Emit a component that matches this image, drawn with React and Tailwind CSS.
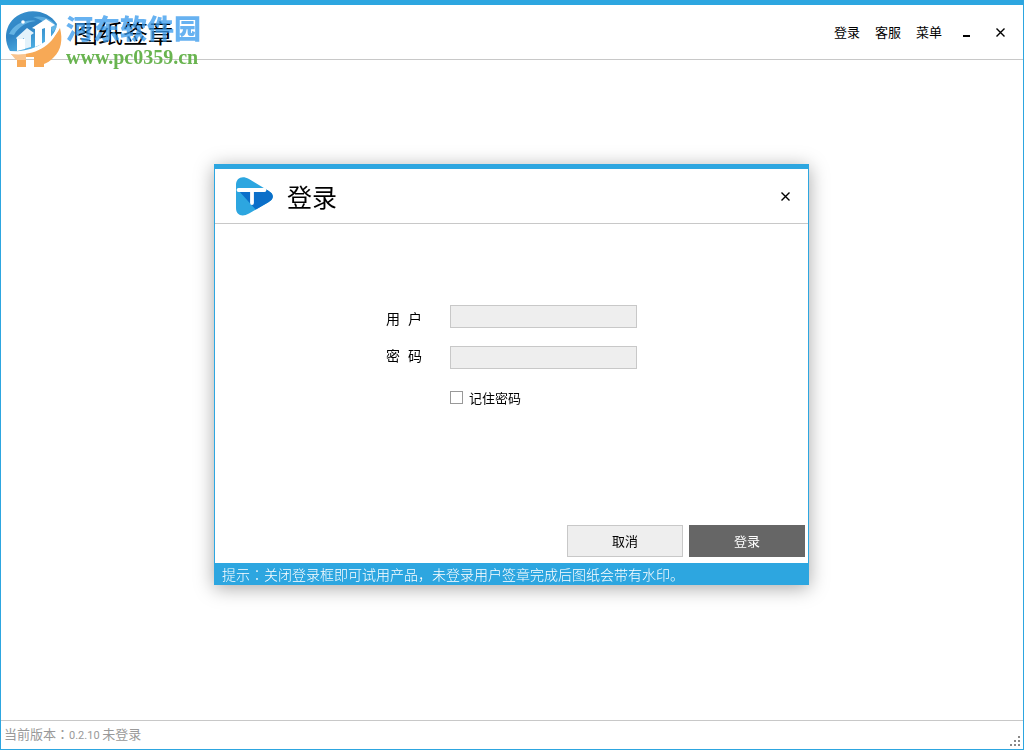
import { useState } from 'react';

const menuItems = ['登录', '客服', '菜单'];

const fields = [
    { id: 'user', label: ['用', '户'], type: 'text' },
    { id: 'password', label: ['密', '码'], type: 'password' },
];

function CloseIcon() {
    return (
        <svg width="9" height="9" viewBox="0 0 9 9" fill="none" stroke="currentColor" strokeWidth="1.4">
            <path d="M0.5 0.5 8.5 8.5M8.5 0.5 0.5 8.5" />
        </svg>
    );
}

// Centred full-width colon, the SC face pushes it to the left edge
function Colon() {
    return <span className="font-['Noto_Sans_CJK_TC',sans-serif]">：</span>;
}

function PlayLogo() {
    return (
        <svg width="38" height="40" viewBox="0 0 38 40" aria-hidden="true">
            <defs>
                <clipPath id="play-shape">
                    <path d="M1 9C1 2 7 -1 14 3L33 14.5C39.5 18 39.5 23 33 26.5L14 37.5C7 41.5 1 39 1 32Z" />
                </clipPath>
            </defs>
            <g clipPath="url(#play-shape)">
                <rect width="38" height="40" fill="#2da6e0" />
                <path d="M4 15 31 13.5 38 10V28L21 34Z" fill="#0b6fc9" />
            </g>
            <path d="M3.5 14H29.5M17 14V27" stroke="#fff" strokeWidth="3.8" strokeLinecap="round" fill="none" />
        </svg>
    );
}

function GlobeLogo() {
    return (
        <svg width="58" height="58" viewBox="0 0 58 58" aria-hidden="true">
            <defs>
                <linearGradient id="globe-blue" x1="0" y1="0" x2="0.6" y2="1">
                    <stop offset="0" stopColor="#3a93cf" />
                    <stop offset="0.5" stopColor="#2f84c4" />
                    <stop offset="1" stopColor="#55b8ea" />
                </linearGradient>
            </defs>
            <path d="M5 41C-2 30 0 14 12 6C25 -3 44 1 52 14C50 28 37 38 22 41C15 42 9 42 5 41Z" fill="url(#globe-blue)" />
            <path d="M4 24C9 14 20 9 31 11C22 12 14 16 9 25Z" fill="#7cc6f0" opacity="0.7" />
            <path d="M28 7C38 5 47 9 52 17L48 22C44 14 37 10 28 7Z" fill="#7cc6f0" opacity="0.6" />
            <circle cx="18" cy="12" r="1.8" fill="#fff" />
            <path d="M11 28 22 18 29 23 26 25V37L19 39V28L14 32Z" fill="#e3f2fb" />
            <path d="M12 29H20V39L12 41Z" fill="#fff" />
            <path d="M27 18 41 9 50 15 46 17V29L40 33V18L37 19V34L30 37V19Z" fill="#fff" />
            <path d="M6 44C26 45 46 35 55 18C58 30 56 40 49 47C45 51 42 53 39 54V57H29V47H21V57H12V49Z" fill="#f7a956" />
            <path d="M6 44H21V50H11Z" fill="#f9c48e" />
            <path d="M4 41C24 43 45 34 54 15C50 36 28 47 6 44Z" fill="#fff" />
        </svg>
    );
}

function Watermark() {
    return (
        <div className="pointer-events-none absolute top-[5px] left-1 z-10 flex items-start gap-[3px]">
            <GlobeLogo />
            <div className="whitespace-nowrap">
                <div className="text-[27px] leading-9 font-black text-[#3498ec] opacity-75">河东软件园</div>
                <div className="pt-px font-['Liberation_Serif',serif] text-xl leading-5 font-bold text-[#69b450]">
                    www.pc0359.cn
                </div>
            </div>
        </div>
    );
}

function LoginDialog() {
    const [remember, setRemember] = useState(false);

    return (
        <form
            role="dialog"
            aria-labelledby="dialog-title"
            onSubmit={(e) => e.preventDefault()}
            className="flex w-full max-w-[595px] flex-col border border-t-5 border-[#2da6e0] bg-white shadow-[0_3px_18px_rgba(0,0,0,0.35)]"
        >
            <header className="flex h-[55px] items-center border-b border-[#c8c8c8] pr-[17px] pl-5">
                <PlayLogo />
                <h2 id="dialog-title" className="ml-[14px] text-[25px] leading-8">登录</h2>
                <button type="button" aria-label="关闭" className="ml-auto p-px">
                    <CloseIcon />
                </button>
            </header>

            <div className="flex flex-col items-center pt-[81px] pb-[118px]">
                <div className="flex flex-col gap-[19px]">
                    <div className="flex">
                        <div className="flex w-16 flex-col gap-[17px] pt-[3px]">
                            {fields.map((field) => (
                                <label key={field.id} htmlFor={field.id} className="flex gap-2 text-sm leading-5">
                                    {field.label.map((char) => (
                                        <span key={char}>{char}</span>
                                    ))}
                                </label>
                            ))}
                        </div>
                        <div className="flex flex-col gap-[18px]">
                            {fields.map((field) => (
                                <input
                                    key={field.id}
                                    id={field.id}
                                    type={field.type}
                                    className="h-[23px] w-[187px] border border-[#c8c8c8] bg-[#eee] px-1 text-sm outline-none"
                                />
                            ))}
                        </div>
                    </div>
                    <label className="ml-16 flex items-center gap-[6px] text-[13px] leading-[19px]">
                        <input
                            type="checkbox"
                            checked={remember}
                            onChange={(e) => setRemember(e.target.checked)}
                            className="size-[13px] appearance-none border border-[#999] bg-white checked:bg-[#2da6e0]"
                        />
                        记住密码
                    </label>
                </div>
            </div>

            <div className="flex justify-end gap-[6px] pr-[3px] pb-[6px] text-[13px]">
                <button type="button" className="h-8 w-29 border border-[#c8c8c8] bg-[#eee]">取消</button>
                <button type="submit" className="h-8 w-29 bg-[#666] text-white">登录</button>
            </div>

            <p className="bg-[#2da6e0] px-[7px] pt-px text-sm leading-5 font-light text-white">
                提示<Colon />关闭登录框即可试用产品，未登录用户签章完成后图纸会带有水印。
            </p>
        </form>
    );
}

// Dotted corner handle, three rows that grow to the right
function ResizeGrip() {
    return (
        <svg width="10" height="10" viewBox="0 0 10 10" fill="#888" aria-hidden="true">
            <path d="M8 0h2v2h-2zM4 4h2v2h-2zM8 4h2v2h-2zM0 8h2v2h-2zM4 8h2v2h-2zM8 8h2v2h-2z" />
        </svg>
    );
}

export default function App() {
    return (
        <div className="relative flex min-h-screen flex-col border border-t-5 border-[#2da6e0] bg-white font-['Noto_Sans_CJK_SC',sans-serif] text-black">
            <header className="relative flex h-[55px] items-center border-b border-[#c8c8c8] pr-[18px] pl-[72px]">
                <Watermark />
                <h1 className="text-[25px] leading-8">图纸签章</h1>
                <nav className="ml-auto flex items-center gap-[15px] text-[13px] leading-5">
                    {menuItems.map((item) => (
                        <button key={item} type="button">{item}</button>
                    ))}
                </nav>
                <button type="button" aria-label="最小化" className="ml-[21px] pt-[7px]">
                    <svg width="7" height="2" viewBox="0 0 7 2">
                        <path d="M0 0h7v2H0z" />
                    </svg>
                </button>
                <button type="button" aria-label="关闭" className="ml-[26px]">
                    <CloseIcon />
                </button>
            </header>

            <main className="flex-1" />

            <footer className="flex h-[29px] items-center justify-between border-t border-[#c8c8c8] px-[3px] text-[13px] leading-5 text-[#999]">
                <span>
                    当前版本<Colon />
                    <span className="font-[Roboto,sans-serif] text-[11px]">0.2.10 </span>
                    未登录
                </span>
                <span className="self-end pb-[3px]">
                    <ResizeGrip />
                </span>
            </footer>

            <div className="fixed inset-0 flex items-center justify-center pr-px pb-px">
                <LoginDialog />
            </div>
        </div>
    );
}
